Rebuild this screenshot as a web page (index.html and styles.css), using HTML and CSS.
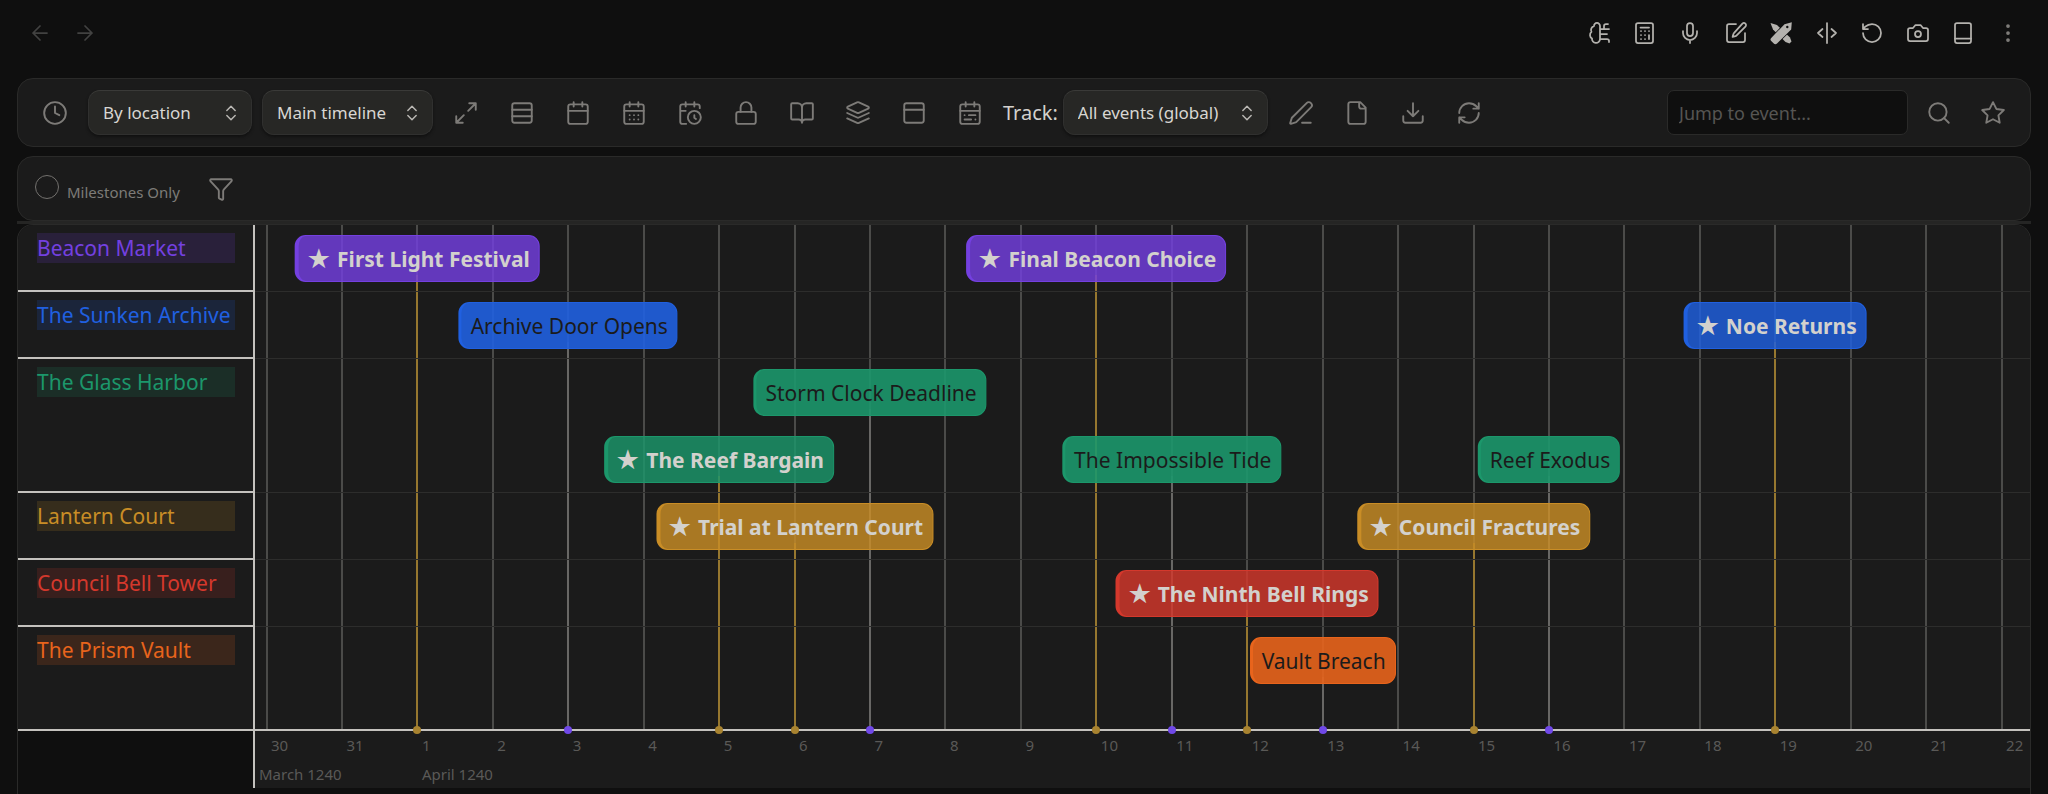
FILE: index.html
```html
<!DOCTYPE html>
<html lang="en">
<head>
<meta charset="utf-8">
<title>Timeline</title>
<link rel="stylesheet" href="styles.css">
</head>
<body>
<header class="topbar">
  <nav class="history" aria-label="History">
    <button class="top-btn faint" aria-label="Back"><svg class="icon" viewBox="0 0 24 24"><path d="m12 19-7-7 7-7M19 12H5"/></svg></button>
    <button class="top-btn faint" aria-label="Forward"><svg class="icon" viewBox="0 0 24 24"><path d="M5 12h14M12 5l7 7-7 7"/></svg></button>
  </nav>
  <div class="top-actions">
    <button class="top-btn" aria-label="Assistant"><svg class="icon" viewBox="0 0 24 24"><path d="M12 5a3 3 0 1 0-5.997.125 4 4 0 0 0-2.526 5.770 4 4 0 0 0 .556 6.588A4 4 0 1 0 12 18ZM12 13h7M12 18h7a2 2 0 0 1 2 2v1M12 8h9M16 8V5a2 2 0 0 1 2-2h2"/></svg></button>
    <button class="top-btn" aria-label="Calculator"><svg class="icon" viewBox="0 0 24 24"><rect x="3" y="2" width="17" height="20" rx="2"/><path d="M7.500 6.500h8.500M16 14v4M16 10h.01M12 10h.01M8 10h.01M12 14h.01M8 14h.01M12 18h.01M8 18h.01"/></svg></button>
    <button class="top-btn" aria-label="Record"><svg class="icon" viewBox="0 0 24 24"><path d="M12 2a3 3 0 0 0-3 3v7a3 3 0 0 0 6 0V5a3 3 0 0 0-3-3ZM19 10v2a7 7 0 0 1-14 0v-2M12 19v3"/></svg></button>
    <button class="top-btn" aria-label="Edit"><svg class="icon" viewBox="0 0 24 24"><path d="M12 3H5a2 2 0 0 0-2 2v14a2 2 0 0 0 2 2h14a2 2 0 0 0 2-2v-7"/><path d="M18.400 2.600a2.100 2.100 0 0 1 3 3l-9 9a2 2 0 0 1-.9.500l-2.900.8.8-2.900a2 2 0 0 1 .5-.9z"/></svg></button>
    <button class="top-btn" aria-label="Tools"><svg class="icon solid" viewBox="0 0 24 24"><path d="M1.500 2 8 4l13 12.500 1.500 4-2 2-4-1.500L4 8.500Z"/><path class="front" fill-rule="evenodd" d="m22.800 1.200-.6 7.300L8 22.500c-1 1-2.500.8-3.500-.2l-2.300-2.300c-1-1-1-2 0-3L15.500 3.200ZM18.300 4.800a1.200 1.200 0 1 0 0 2.400 1.200 1.200 0 0 0 0-2.400Z"/></svg></button>
    <button class="top-btn" aria-label="Split"><svg class="icon" viewBox="0 0 24 24"><path d="M12 2v20M7.500 8 3 12l4.500 4M16.500 8l4.500 4-4.500 4"/></svg></button>
    <button class="top-btn" aria-label="Undo"><svg class="icon" viewBox="0 0 24 24"><path d="M3 12a9 9 0 1 0 9-9 9.750 9.750 0 0 0-6.740 2.740L3 8M3 3v5h5"/></svg></button>
    <button class="top-btn" aria-label="Snapshot"><svg class="icon" viewBox="0 0 24 24"><path d="M14.500 4h-5L7 7H4a2 2 0 0 0-2 2v9a2 2 0 0 0 2 2h16a2 2 0 0 0 2-2V9a2 2 0 0 0-2-2h-3z"/><circle cx="12" cy="13" r="3"/></svg></button>
    <button class="top-btn" aria-label="Reading view"><svg class="icon" viewBox="0 0 24 24"><rect x="4" y="2" width="16" height="20" rx="2"/><path d="M4 17.500h16"/></svg></button>
    <button class="top-btn dim" aria-label="More options"><svg class="icon" viewBox="0 0 24 24"><circle cx="12" cy="12" r="1"/><circle cx="12" cy="5" r="1"/><circle cx="12" cy="19" r="1"/></svg></button>
  </div>
</header>

<main class="view">
  <div class="toolbar">
    <div class="tools">
      <button class="tool" aria-label="Timeline"><svg class="icon" viewBox="0 0 24 24"><circle cx="12" cy="12" r="10"/><path d="M12 6v6l4 2"/></svg></button>
      <div class="select-box grouping"><select aria-label="Grouping"><option>By location</option></select><svg class="icon" viewBox="0 0 24 24"><path d="m7 15 5 5 5-5M7 9l5-5 5 5"/></svg></div>
      <div class="select-box source"><select aria-label="Timeline source"><option>Main timeline</option></select><svg class="icon" viewBox="0 0 24 24"><path d="m7 15 5 5 5-5M7 9l5-5 5 5"/></svg></div>
      <button class="tool" aria-label="Fit"><svg class="icon" viewBox="0 0 24 24"><path d="M15 3h6v6M21 3l-7 7M3 21l7-7M9 21H3v-6"/></svg></button>
      <button class="tool" aria-label="Stacking"><svg class="icon" viewBox="0 0 24 24"><rect x="3" y="3" width="18" height="18" rx="2"/><path d="M21 9H3M21 15H3"/></svg></button>
      <button class="tool" aria-label="Month"><svg class="icon" viewBox="0 0 24 24"><path d="M8 2v4M16 2v4M3 10h18"/><rect x="3" y="4" width="18" height="18" rx="2"/></svg></button>
      <button class="tool" aria-label="Days"><svg class="icon" viewBox="0 0 24 24"><path d="M8 2v4M16 2v4M3 10h18M8 14h.01M12 14h.01M16 14h.01M8 18h.01M12 18h.01M16 18h.01"/><rect x="3" y="4" width="18" height="18" rx="2"/></svg></button>
      <button class="tool" aria-label="Today"><svg class="icon" viewBox="0 0 24 24"><path d="M21 7.500V6a2 2 0 0 0-2-2H5a2 2 0 0 0-2 2v14a2 2 0 0 0 2 2h3.500M16 2v4M8 2v4M3 10h5M17.500 17.500 16 16.300V14"/><circle cx="16" cy="16" r="6"/></svg></button>
      <button class="tool" aria-label="Lock"><svg class="icon" viewBox="0 0 24 24"><rect x="3" y="11" width="18" height="11" rx="2"/><path d="M7 11V7a5 5 0 0 1 10 0v4"/></svg></button>
      <button class="tool" aria-label="Narrative"><svg class="icon" viewBox="0 0 24 24"><path d="M12 7v14M3 18a1 1 0 0 1-1-1V4a1 1 0 0 1 1-1h5a4 4 0 0 1 4 4 4 4 0 0 1 4-4h5a1 1 0 0 1 1 1v13a1 1 0 0 1-1 1h-6a3 3 0 0 0-3 3 3 3 0 0 0-3-3z"/></svg></button>
      <button class="tool" aria-label="Layers"><svg class="icon" viewBox="0 0 24 24"><path d="M12.830 2.180a2 2 0 0 0-1.660 0L2.600 6.080a1 1 0 0 0 0 1.830l8.580 3.910a2 2 0 0 0 1.660 0l8.580-3.900a1 1 0 0 0 0-1.830zM22 12l-9.170 4.160a2 2 0 0 1-1.660 0L2 12M22 17l-9.170 4.160a2 2 0 0 1-1.660 0L2 17"/></svg></button>
      <button class="tool" aria-label="Panel"><svg class="icon" viewBox="0 0 24 24"><rect x="3" y="3" width="18" height="18" rx="2"/><path d="M3 9h18"/></svg></button>
      <button class="tool" aria-label="Range"><svg class="icon" viewBox="0 0 24 24"><rect x="3" y="4" width="18" height="18" rx="2"/><path d="M16 2v4M3 10h18M8 2v4M17 14h-6M13 18H7M7 14h.01M17 18h.01"/></svg></button>
      <div class="track">
        <label for="track">Track:</label>
        <div class="select-box tracks"><select id="track"><option>All events (global)</option></select><svg class="icon" viewBox="0 0 24 24"><path d="m7 15 5 5 5-5M7 9l5-5 5 5"/></svg></div>
      </div>
      <button class="tool" aria-label="Edit track"><svg class="icon" viewBox="0 0 24 24"><path d="M13 21h8M21.174 6.812a1 1 0 0 0-3.986-3.987L3.842 16.174a2 2 0 0 0-.5.830l-1.321 4.352a.5.5 0 0 0 .623.622l4.353-1.320a2 2 0 0 0 .830-.497z"/></svg></button>
      <button class="tool" aria-label="New note"><svg class="icon" viewBox="0 0 24 24"><path d="M15 2H6a2 2 0 0 0-2 2v16a2 2 0 0 0 2 2h12a2 2 0 0 0 2-2V7ZM14 2v4a2 2 0 0 0 2 2h4"/></svg></button>
      <button class="tool" aria-label="Export"><svg class="icon" viewBox="0 0 24 24"><path d="M21 15v4a2 2 0 0 1-2 2H5a2 2 0 0 1-2-2v-4M7 10l5 5 5-5M12 15V3"/></svg></button>
      <button class="tool" aria-label="Refresh"><svg class="icon" viewBox="0 0 24 24"><path d="M3 12a9 9 0 0 1 9-9 9.750 9.750 0 0 1 6.740 2.740L21 8M21 3v5h-5M21 12a9 9 0 0 1-9 9 9.750 9.750 0 0 1-6.740-2.740L3 16M8 16H3v5"/></svg></button>
    </div>
    <div class="jump">
      <input type="text" class="jump-input" placeholder="Jump to event..." aria-label="Jump to event">
      <button class="tool" aria-label="Search"><svg class="icon" viewBox="0 0 24 24"><circle cx="11" cy="11" r="8"/><path d="m21 21-4.300-4.300"/></svg></button>
      <button class="tool" aria-label="Favourite"><svg class="icon" viewBox="0 0 24 24"><path d="m12 2 3.090 6.260L22 9.270l-5 4.870 1.180 6.880L12 17.770l-6.180 3.250L7 14.140 2 9.270l6.910-1.010z"/></svg></button>
    </div>
  </div>

  <div class="filters">
    <label class="milestones"><input type="checkbox"><span>Milestones Only</span></label>
    <button class="tool" aria-label="Filter"><svg class="icon" viewBox="0 0 24 24"><path d="M10 20a1 1 0 0 0 .553.895l2 1A1 1 0 0 0 14 21v-7a2 2 0 0 1 .517-1.341L21.740 4.670A1 1 0 0 0 21 3H3a1 1 0 0 0-.742 1.670l7.225 7.989A2 2 0 0 1 10 14z"/></svg></button>
  </div>

  <div class="divider"></div>

  <section class="timeline" aria-label="Main timeline">
    <div class="groups">
      <div class="group violet"><span>Beacon Market</span></div>
      <div class="group blue"><span>The Sunken Archive</span></div>
      <div class="group green tall"><span>The Glass Harbor</span></div>
      <div class="group amber"><span>Lantern Court</span></div>
      <div class="group red"><span>Council Bell Tower</span></div>
      <div class="group orange last"><span>The Prism Vault</span></div>
    </div>

    <div class="chart">
      <div class="lines">
        <i style="--d:0"></i><i style="--d:1"></i><i style="--d:2"></i><i style="--d:3"></i><i style="--d:4"></i><i style="--d:5"></i><i style="--d:6"></i><i style="--d:7"></i><i style="--d:8"></i><i style="--d:9"></i><i style="--d:10"></i><i style="--d:11"></i><i style="--d:12"></i><i style="--d:13"></i><i style="--d:14"></i><i style="--d:15"></i><i style="--d:16"></i><i style="--d:17"></i><i style="--d:18"></i><i style="--d:19"></i><i style="--d:20"></i><i style="--d:21"></i><i style="--d:22"></i><i style="--d:23"></i>
      </div>
      <div class="stems">
        <i class="gold" style="--d:2;--lane:0"></i>
        <i style="--d:4;--lane:1"></i>
        <i class="gold" style="--d:6;--lane:3"></i>
        <i class="gold" style="--d:7;--lane:4"></i>
        <i style="--d:8;--lane:2"></i>
        <i class="gold" style="--d:11;--lane:0"></i>
        <i style="--d:12;--lane:3"></i>
        <i class="gold" style="--d:13;--lane:5"></i>
        <i style="--d:14;--lane:6"></i>
        <i class="gold" style="--d:16;--lane:4"></i>
        <i style="--d:17;--lane:3"></i>
        <i class="gold" style="--d:20;--lane:1"></i>
      </div>
      <div class="row">
        <div class="event violet milestone" style="--d:2"><b>★</b>First Light Festival</div>
        <div class="event violet milestone" style="--d:11"><b>★</b>Final Beacon Choice</div>
      </div>
      <div class="row">
        <div class="event blue" style="--d:4">Archive Door Opens</div>
        <div class="event blue milestone" style="--d:20"><b>★</b>Noe Returns</div>
      </div>
      <div class="row tall">
        <div class="event green" style="--d:8">Storm Clock Deadline</div>
        <div class="event green milestone lower" style="--d:6"><b>★</b>The Reef Bargain</div>
        <div class="event green lower" style="--d:12">The Impossible Tide</div>
        <div class="event green lower" style="--d:17">Reef Exodus</div>
      </div>
      <div class="row">
        <div class="event amber milestone" style="--d:7"><b>★</b>Trial at Lantern Court</div>
        <div class="event amber milestone" style="--d:16"><b>★</b>Council Fractures</div>
      </div>
      <div class="row">
        <div class="event red milestone" style="--d:13"><b>★</b>The Ninth Bell Rings</div>
      </div>
      <div class="row last">
        <div class="event orange" style="--d:14">Vault Breach</div>
      </div>
    </div>

    <div class="corner"></div>
    <div class="axis">
      <div class="days">
        <span>30</span><span>31</span><span>1</span><span>2</span><span>3</span><span>4</span><span>5</span><span>6</span><span>7</span><span>8</span><span>9</span><span>10</span><span>11</span><span>12</span><span>13</span><span>14</span><span>15</span><span>16</span><span>17</span><span>18</span><span>19</span><span>20</span><span>21</span><span>22</span>
      </div>
      <div class="months"><span class="march">March 1240</span><span>April 1240</span></div>
    </div>
  </section>
</main>
</body>
</html>
```

FILE: styles.css
```css
:root {
  --page: #0f0f0f;
  --panel: #1b1b1b;
  --edge: #2a2a29;
  --muted: #7d7b78;
  --axis-line: #c4c2be;
  --lane-height: 67px;
}

* {
  box-sizing: border-box;
}

body {
  margin: 0;
  min-height: 100vh;
  display: flex;
  flex-direction: column;
  background: var(--page);
  color: #d3d1cd;
  font-family: "Noto Sans", "Open Sans", sans-serif;
  font-size: 18px;
}

button {
  display: grid;
  place-items: center;
  padding: 0;
  border: 0;
  background: none;
  color: inherit;
}

.icon {
  display: block;
  width: 26px;
  height: 26px;
  fill: none;
  stroke: currentColor;
  stroke-width: 1.75;
  stroke-linecap: round;
  stroke-linejoin: round;
}

.icon.solid {
  fill: currentColor;
  stroke: none;
}

.icon .front {
  stroke: var(--page);
  stroke-width: 1.5;
  paint-order: stroke;
}

/* Window bar */
.topbar {
  display: flex;
  justify-content: space-between;
  padding: 10px 17px 22px;
}

.history,
.top-actions {
  display: flex;
}

.top-actions {
  width: 454px;
  justify-content: space-between;
  color: #b4b2ae;
}

.top-btn {
  width: 45px;
  height: 46px;
}

.top-btn .icon {
  width: 24px;
  height: 24px;
}

.top-btn.faint {
  color: #424241;
}

.top-btn.dim {
  color: #7f7d7a;
}

.view {
  flex: 1;
  display: flex;
  flex-direction: column;
  padding: 0 17px;
}

/* Toolbar */
.toolbar,
.filters {
  display: flex;
  align-items: center;
  border: 1px solid var(--edge);
  border-radius: 16px;
  background: var(--panel);
}

.toolbar {
  justify-content: space-between;
  height: 69px;
  padding: 0 14px;
  margin-bottom: 9px;
}

.tools,
.jump,
.track {
  display: flex;
  align-items: center;
}

.tools {
  gap: 10px;
}

.jump {
  gap: 8px;
}

.track {
  gap: 5px;
  font-size: 20px;
}

.tool {
  width: 46px;
  height: 46px;
  color: var(--muted);
}

.select-box {
  display: grid;
  align-items: center;
  color: #bab8b4;
}

.select-box > * {
  grid-area: 1 / 1;
}

.select-box select {
  appearance: none;
  width: 100%;
  height: 45px;
  padding: 0 38px 0 14px;
  border: 1px solid #30302f;
  border-top-color: #3a3a38;
  border-radius: 12px;
  background: #272725;
  box-shadow: 0 2px 3px #111;
  color: #d8d6d2;
  font: inherit;
  font-size: 17px;
}

.select-box .icon {
  justify-self: end;
  width: 20px;
  height: 20px;
  margin-right: 11px;
  pointer-events: none;
}

.grouping {
  width: 164px;
}

.source {
  width: 171px;
}

.tracks {
  width: 205px;
}

.jump-input {
  width: 241px;
  height: 45px;
  padding: 0 11px;
  border: 1px solid var(--edge);
  border-radius: 7px;
  background: var(--page);
  color: #d3d1cd;
  font: inherit;
}

.jump-input::placeholder {
  color: #565553;
  opacity: 1;
}

/* Filter bar */
.filters {
  height: 65px;
  padding: 0 17px;
  gap: 18px;
}

.milestones {
  display: flex;
  align-items: center;
  gap: 8px;
  color: var(--muted);
  font-size: 15px;
}

.milestones input {
  appearance: none;
  width: 24px;
  height: 24px;
  margin: 0 0 4px;
  border: 1px solid #73716e;
  border-radius: 50%;
}

.milestones span {
  padding-top: 6px;
}

.divider {
  height: 3px;
  background: #252524;
}

/* Timeline */
.timeline {
  flex: 1;
  display: grid;
  grid-template-columns: 237px 1fr;
  grid-template-rows: auto auto 1fr;
  border: 1px solid var(--edge);
  border-bottom: 0;
  border-radius: 16px 16px 0 0;
  overflow: hidden;
}

.groups {
  border-right: 2px solid var(--axis-line);
  border-bottom: 2px solid var(--axis-line);
  background: var(--panel);
}

.group {
  height: var(--lane-height);
  padding: 8px 18px 0 19px;
  border-bottom: 2px solid var(--axis-line);
  color: var(--tint);
  font-size: 21px;
  line-height: 30px;
}

.group span {
  display: block;
  background: color-mix(in srgb, var(--tint) 16%, transparent);
  white-space: nowrap;
}

.tall {
  height: calc(var(--lane-height) * 2);
}

.last,
.group.last {
  height: 102px;
  border-bottom: 0;
}

.violet { --tint: #7440e0; }
.blue { --tint: #2060e0; }
.green { --tint: #1c976b; }
.amber { --tint: #c98d26; }
.red { --tint: #d4382c; }
.orange { --tint: #e8641c; }

.chart {
  position: relative;
  border-bottom: 2px solid var(--axis-line);
  background: var(--panel);
}

.row {
  position: relative;
  height: var(--lane-height);
  border-bottom: 1px solid #2d2d2c;
}

.row.tall {
  height: calc(var(--lane-height) * 2);
}

.row.last {
  height: 102px;
  border-bottom: 0;
}

.lines i,
.stems i {
  position: absolute;
  left: calc(0.65% + var(--d) * 4.25%);
  bottom: 0;
  width: 2px;
  margin-left: -1px;
  background: #4b4b49;
}

.lines i {
  top: 0;
}

.stems i {
  top: calc(var(--lane) * var(--lane-height) + 50px);
  background: #686765;
}

.stems .gold {
  background: #96772f;
}

.stems i::after {
  content: "";
  position: absolute;
  z-index: 1;
  left: -3px;
  bottom: -5px;
  width: 8px;
  height: 8px;
  border-radius: 50%;
  background: #7048e8;
}

.stems .gold::after {
  background: #a88330;
}

.event {
  position: absolute;
  top: 10px;
  left: calc(0.65% + var(--d) * 4.25%);
  height: 47px;
  padding: 0 9px;
  border: 1px solid var(--tint);
  border-left-width: 3px;
  border-radius: 11px;
  background: color-mix(in srgb, var(--tint) 90%, transparent);
  color: #1b1b1b;
  font-size: 21px;
  line-height: 47px;
  white-space: nowrap;
  transform: translateX(-50%);
}

.event.lower {
  top: 77px;
}

.event.milestone {
  border-left-width: 4px;
  background: color-mix(in srgb, var(--tint) 82%, transparent);
  color: #d3d1cd;
  font-weight: 700;
}

.event b {
  margin-right: 7px;
  font-size: 24px;
  line-height: 1;
}

/* Axis */
.corner {
  border-right: 2px solid var(--axis-line);
}

.axis {
  height: 57px;
  overflow: hidden;
  background: var(--panel);
  color: #5a5957;
  font-size: 15px;
  line-height: 20px;
}

.days {
  display: flex;
  padding-top: 4px;
}

.days span {
  flex: 0 0 4.25%;
}

.days span:first-child {
  margin-left: 16px;
}

.days span:last-child {
  flex-basis: auto;
}

.months {
  display: flex;
  padding: 9px 0 0 4px;
}

.march {
  width: 9.2%;
}
```
